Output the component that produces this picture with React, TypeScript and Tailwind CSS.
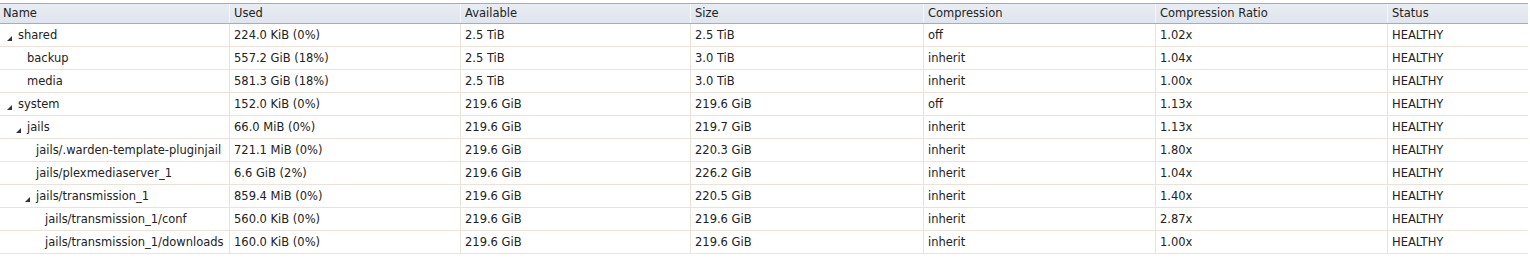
const COLS = ['Name', 'Used', 'Available', 'Size', 'Compression', 'Compression Ratio', 'Status'];

type Row = { name: string; level: number; open?: boolean; used: string; avail: string; size: string; comp: string; ratio: string };

const ROWS: Row[] = [
  { name: 'shared', level: 0, open: true, used: '224.0 KiB (0%)', avail: '2.5 TiB', size: '2.5 TiB', comp: 'off', ratio: '1.02x' },
  { name: 'backup', level: 1, used: '557.2 GiB (18%)', avail: '2.5 TiB', size: '3.0 TiB', comp: 'inherit', ratio: '1.04x' },
  { name: 'media', level: 1, used: '581.3 GiB (18%)', avail: '2.5 TiB', size: '3.0 TiB', comp: 'inherit', ratio: '1.00x' },
  { name: 'system', level: 0, open: true, used: '152.0 KiB (0%)', avail: '219.6 GiB', size: '219.6 GiB', comp: 'off', ratio: '1.13x' },
  { name: 'jails', level: 1, open: true, used: '66.0 MiB (0%)', avail: '219.6 GiB', size: '219.7 GiB', comp: 'inherit', ratio: '1.13x' },
  { name: 'jails/.warden-template-pluginjail', level: 2, used: '721.1 MiB (0%)', avail: '219.6 GiB', size: '220.3 GiB', comp: 'inherit', ratio: '1.80x' },
  { name: 'jails/plexmediaserver_1', level: 2, used: '6.6 GiB (2%)', avail: '219.6 GiB', size: '226.2 GiB', comp: 'inherit', ratio: '1.04x' },
  { name: 'jails/transmission_1', level: 2, open: true, used: '859.4 MiB (0%)', avail: '219.6 GiB', size: '220.5 GiB', comp: 'inherit', ratio: '1.40x' },
  { name: 'jails/transmission_1/conf', level: 3, used: '560.0 KiB (0%)', avail: '219.6 GiB', size: '219.6 GiB', comp: 'inherit', ratio: '2.87x' },
  { name: 'jails/transmission_1/downloads', level: 3, used: '160.0 KiB (0%)', avail: '219.6 GiB', size: '219.6 GiB', comp: 'inherit', ratio: '1.00x' },
];

const GRID = 'grid grid-cols-[230px_231px_230px_233px_232px_232px_1fr]';
const INDENT = ['pl-[18px]', 'pl-[27px]', 'pl-[36px]', 'pl-[45px]'];
const ARROW = ['left-[7px]', 'left-[16px]', 'left-[25px]', 'left-[34px]'];

function Expander() {
  return (
    <svg width="5" height="5" viewBox="0 0 5 5" className="block">
      <polygon points="5,0 5,5 0,5" fill="#333" />
    </svg>
  );
}

export default function App() {
  return (
    <div className="bg-white pt-[3px] w-[1530px] h-[262px] font-['DejaVu_Sans',Verdana,sans-serif] text-[11.5px] text-[#222]">
      <div className="w-[1528px]">
        <div className={`${GRID} h-[21px] border-y border-[#a9acb1] bg-gradient-to-b from-[#e9edf3] to-[#dfe5ee]`}>
          {COLS.map((c, i) => (
            <div key={c} className={`flex items-center px-[4px] pt-px ${i < COLS.length - 1 ? 'border-r border-[#f4f6f9]' : ''} ${i === 0 ? 'pl-[3px]' : ''}`}>
              {c}
            </div>
          ))}
        </div>
        {ROWS.map(r => {
          const cells = [r.used, r.avail, r.size, r.comp, r.ratio, 'HEALTHY'];
          return (
            <div key={r.name} className={`${GRID} h-[23px] border-b border-[#ede2d8]`}>
              <div className={`relative flex items-center pt-px border-r border-[#ede2d8] ${INDENT[r.level]}`}>
                {r.open && (
                  <span className={`absolute top-[12px] ${ARROW[r.level]}`}>
                    <Expander />
                  </span>
                )}
                {r.name}
              </div>
              {cells.map((c, i) => (
                <div key={i} className={`flex items-center px-[4px] pt-px ${i < cells.length - 1 ? 'border-r border-[#ede2d8]' : ''}`}>
                  {c}
                </div>
              ))}
            </div>
          );
        })}
      </div>
    </div>
  );
}
